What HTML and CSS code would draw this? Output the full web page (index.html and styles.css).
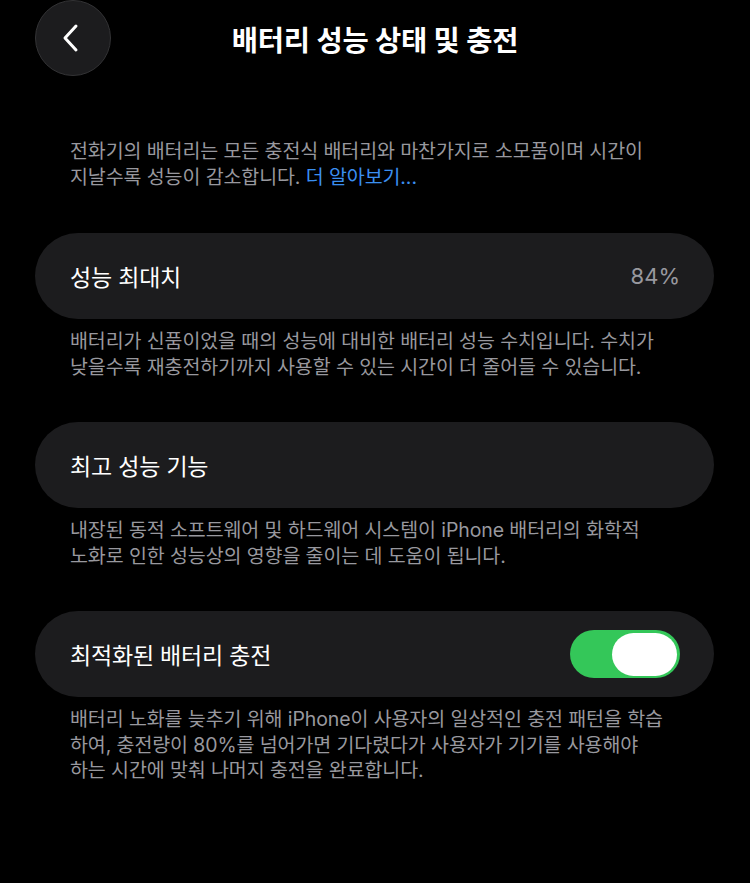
FILE: index.html
```html
<!DOCTYPE html>
<html lang="ko">
<head>
  <meta charset="UTF-8">
  <meta name="viewport" content="width=device-width, initial-scale=1.0">
  <title>배터리 성능 상태 및 충전</title>
  <link rel="stylesheet" href="styles.css">
</head>
<body>

<div class="screen">
  <!-- Top bar with back button and title -->
  <div class="topbar">
    <button class="back-btn" aria-label="뒤로">
      <svg width="22" height="30" viewBox="0 0 22 30">
        <path d="M16 3 L5 15 L16 27" fill="none" stroke="#fff" stroke-width="3" stroke-linecap="round" stroke-linejoin="round"/>
      </svg>
    </button>
    <h1 class="title">배터리 성능 상태 및 충전</h1>
    <div></div>
  </div>

  <p class="intro">전화기의 배터리는 모든 충전식 배터리와 마찬가지로 소모품이며 시간이<br>지날수록 성능이 감소합니다. <a href="#" class="more">더 알아보기...</a></p>

  <div class="group">
    <div class="row">
      <span class="label">성능 최대치</span>
      <span class="value">84%</span>
    </div>
    <p class="caption">배터리가 신품이었을 때의 성능에 대비한 배터리 성능 수치입니다. 수치가<br>낮을수록 재충전하기까지 사용할 수 있는 시간이 더 줄어들 수 있습니다.</p>
  </div>

  <div class="group">
    <div class="row">
      <span class="label">최고 성능 기능</span>
    </div>
    <p class="caption">내장된 동적 소프트웨어 및 하드웨어 시스템이 iPhone 배터리의 화학적<br>노화로 인한 성능상의 영향을 줄이는 데 도움이 됩니다.</p>
  </div>

  <div class="group">
    <div class="row">
      <span class="label">최적화된 배터리 충전</span>
      <span class="toggle on"><span class="knob"></span></span>
    </div>
    <p class="caption">배터리 노화를 늦추기 위해 iPhone이 사용자의 일상적인 충전 패턴을 학습<br>하여, 충전량이 80%를 넘어가면 기다렸다가 사용자가 기기를 사용해야<br>하는 시간에 맞춰 나머지 충전을 완료합니다.</p>
  </div>
</div>

</body>
</html>
```

FILE: styles.css
```css
body {
  margin: 0;
  padding: 0;
  background-color: #000;
  color: #fff;
  font-family: "Inter", "Noto Sans CJK KR", sans-serif;
}

.screen {
  width: 750px;
  min-height: 883px;
}

.topbar {
  display: grid;
  grid-template-columns: 1fr auto 1fr;
  align-items: center;
  height: 76px;
  padding: 0 35px;
}

.back-btn {
  width: 76px;
  height: 76px;
  border-radius: 50%;
  background-color: #1c1c1e;
  border: 1px solid #333335;
  display: flex;
  align-items: center;
  justify-content: center;
  padding: 0 4px 0 0;
  cursor: pointer;
}

.title {
  margin: 0;
  font-size: 28.5px;
  font-weight: 700;
  letter-spacing: -0.2px;
}

.intro,
.caption {
  font-size: 19.5px;
  line-height: 25.5px;
  color: #98989e;
  letter-spacing: -0.1px;
  white-space: nowrap;
  margin: 0;
  padding: 0 70px;
}

.intro {
  margin-top: 63px;
  margin-bottom: 43px;
}

.more {
  color: #3b8ff0;
  text-decoration: none;
}

.group {
  margin-bottom: 42px;
}

.row {
  display: flex;
  align-items: center;
  justify-content: space-between;
  height: 86px;
  margin: 0 36px 0 35px;
  padding: 0 34px 0 35px;
  border-radius: 43px;
  background-color: #1c1c1e;
}

.label {
  font-size: 23px;
  letter-spacing: -0.2px;
}

.value {
  font-size: 22px;
  color: #98989e;
}

.caption {
  margin-top: 10px;
}

/* switch */
.toggle {
  width: 110px;
  height: 48px;
  border-radius: 24px;
  background-color: #34c759;
  display: flex;
  align-items: center;
  justify-content: flex-end;
  padding: 0 3px;
  box-sizing: border-box;
}

.knob {
  width: 65px;
  height: 43px;
  border-radius: 22px;
  background-color: #fff;
}
```
